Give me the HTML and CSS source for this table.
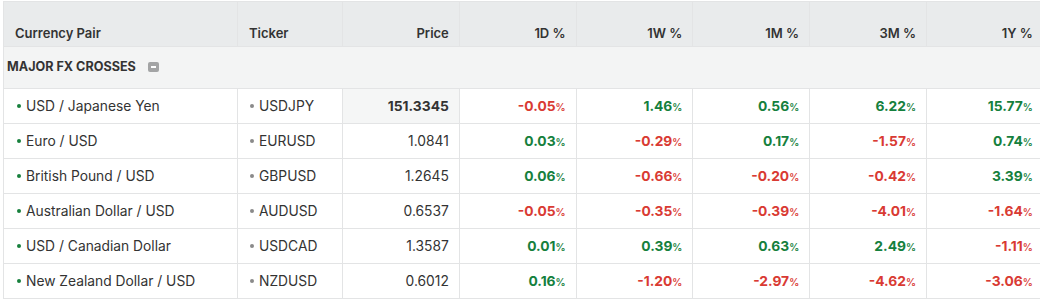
FILE: index.html
```html
<!DOCTYPE html>
<html lang="en">
<head>
    <meta charset="UTF-8">
    <title>FX Crosses</title>
    <link rel="stylesheet" href="styles.css">
</head>
<body>
    <div class="table-wrap">
        <table class="fx-table">
            <colgroup>
                <col class="col-name">
                <col class="col-ticker">
                <col class="col-num">
                <col class="col-num">
                <col class="col-num">
                <col class="col-num">
                <col class="col-num">
                <col class="col-num">
            </colgroup>
            <thead>
                <tr>
                    <th>Currency Pair</th>
                    <th>Ticker</th>
                    <th class="num">Price</th>
                    <th class="num">1D %</th>
                    <th class="num">1W %</th>
                    <th class="num">1M %</th>
                    <th class="num">3M %</th>
                    <th class="num">1Y %</th>
                </tr>
            </thead>
            <tbody>
                <tr class="group-row">
                    <td colspan="8">MAJOR FX CROSSES <span class="collapse-btn"></span></td>
                </tr>
                <tr>
                    <td class="name"><span class="dot dot-green"></span>USD / Japanese Yen</td>
                    <td class="ticker"><span class="dot dot-grey"></span>USDJPY</td>
                    <td class="num price active">151.3345</td>
                    <td class="num down">-0.05<small>%</small></td>
                    <td class="num up">1.46<small>%</small></td>
                    <td class="num up">0.56<small>%</small></td>
                    <td class="num up">6.22<small>%</small></td>
                    <td class="num up">15.77<small>%</small></td>
                </tr>
                <tr>
                    <td class="name"><span class="dot dot-green"></span>Euro / USD</td>
                    <td class="ticker"><span class="dot dot-grey"></span>EURUSD</td>
                    <td class="num price">1.0841</td>
                    <td class="num up">0.03<small>%</small></td>
                    <td class="num down">-0.29<small>%</small></td>
                    <td class="num up">0.17<small>%</small></td>
                    <td class="num down">-1.57<small>%</small></td>
                    <td class="num up">0.74<small>%</small></td>
                </tr>
                <tr>
                    <td class="name"><span class="dot dot-green"></span>British Pound / USD</td>
                    <td class="ticker"><span class="dot dot-grey"></span>GBPUSD</td>
                    <td class="num price">1.2645</td>
                    <td class="num up">0.06<small>%</small></td>
                    <td class="num down">-0.66<small>%</small></td>
                    <td class="num down">-0.20<small>%</small></td>
                    <td class="num down">-0.42<small>%</small></td>
                    <td class="num up">3.39<small>%</small></td>
                </tr>
                <tr>
                    <td class="name"><span class="dot dot-green"></span>Australian Dollar / USD</td>
                    <td class="ticker"><span class="dot dot-grey"></span>AUDUSD</td>
                    <td class="num price">0.6537</td>
                    <td class="num down">-0.05<small>%</small></td>
                    <td class="num down">-0.35<small>%</small></td>
                    <td class="num down">-0.39<small>%</small></td>
                    <td class="num down">-4.01<small>%</small></td>
                    <td class="num down">-1.64<small>%</small></td>
                </tr>
                <tr>
                    <td class="name"><span class="dot dot-green"></span>USD / Canadian Dollar</td>
                    <td class="ticker"><span class="dot dot-grey"></span>USDCAD</td>
                    <td class="num price">1.3587</td>
                    <td class="num up">0.01<small>%</small></td>
                    <td class="num up">0.39<small>%</small></td>
                    <td class="num up">0.63<small>%</small></td>
                    <td class="num up">2.49<small>%</small></td>
                    <td class="num down">-1.11<small>%</small></td>
                </tr>
                <tr>
                    <td class="name"><span class="dot dot-green"></span>New Zealand Dollar / USD</td>
                    <td class="ticker"><span class="dot dot-grey"></span>NZDUSD</td>
                    <td class="num price">0.6012</td>
                    <td class="num up">0.16<small>%</small></td>
                    <td class="num down">-1.20<small>%</small></td>
                    <td class="num down">-2.97<small>%</small></td>
                    <td class="num down">-4.62<small>%</small></td>
                    <td class="num down">-3.06<small>%</small></td>
                </tr>
            </tbody>
        </table>
    </div>
</body>
</html>
```

FILE: styles.css
```css
* {
    margin: 0;
    padding: 0;
    box-sizing: border-box;
}

body {
    font-family: Inter, 'Liberation Sans', Arial, sans-serif;
    background: #fff;
    color: #333;
}

.table-wrap {
    padding: 1px 0 0 3px;
}

.fx-table {
    border-collapse: collapse;
    table-layout: fixed;
    width: 1040px;
    font-size: 13.8px;
}

.col-name {
    width: 234px;
}

.col-ticker {
    width: 105px;
}

.col-num {
    width: 116.8px;
}

.fx-table th,
.fx-table td {
    border: 1px solid #e3e4e5;
    white-space: nowrap;
}

.fx-table th {
    background: #e9ebec;
    height: 45px;
    font-size: 13px;
    font-weight: 600;
    text-align: left;
    vertical-align: bottom;
    padding: 0 10px 5px 11px;
    color: #333;
}

.fx-table td {
    height: 35px;
    padding: 0 10px;
}

.fx-table .num {
    text-align: right;
}

.group-row td {
    background: #f3f4f4;
    height: 42px;
    padding-left: 3px;
    padding-bottom: 2px;
    font-size: 12.6px;
    font-weight: 700;
}

.collapse-btn {
    display: inline-block;
    width: 11px;
    height: 10px;
    background: #a3a4a5;
    border-radius: 2px;
    margin-left: 9px;
    vertical-align: -1px;
    position: relative;
}

.collapse-btn::after {
    content: '';
    position: absolute;
    left: 3px;
    top: 4px;
    width: 5px;
    height: 1.5px;
    background: #fff;
}

.name {
    padding-left: 13px !important;
}

.ticker {
    padding-left: 12px !important;
}

.dot {
    display: inline-block;
    width: 4px;
    height: 4px;
    border-radius: 50%;
    margin-right: 5px;
    vertical-align: 3px;
}

.dot-green {
    background: #17803d;
}

.dot-grey {
    background: #8a8a8a;
}

.price {
    color: #333;
}

.price.active {
    background: #f5f6f6;
    font-weight: 700;
}

.up,
.down {
    font-weight: 700;
}

.up {
    color: #15803d;
}

.down {
    color: #d93a33;
}

small {
    font-size: 10px;
    font-weight: 600;
}
```
